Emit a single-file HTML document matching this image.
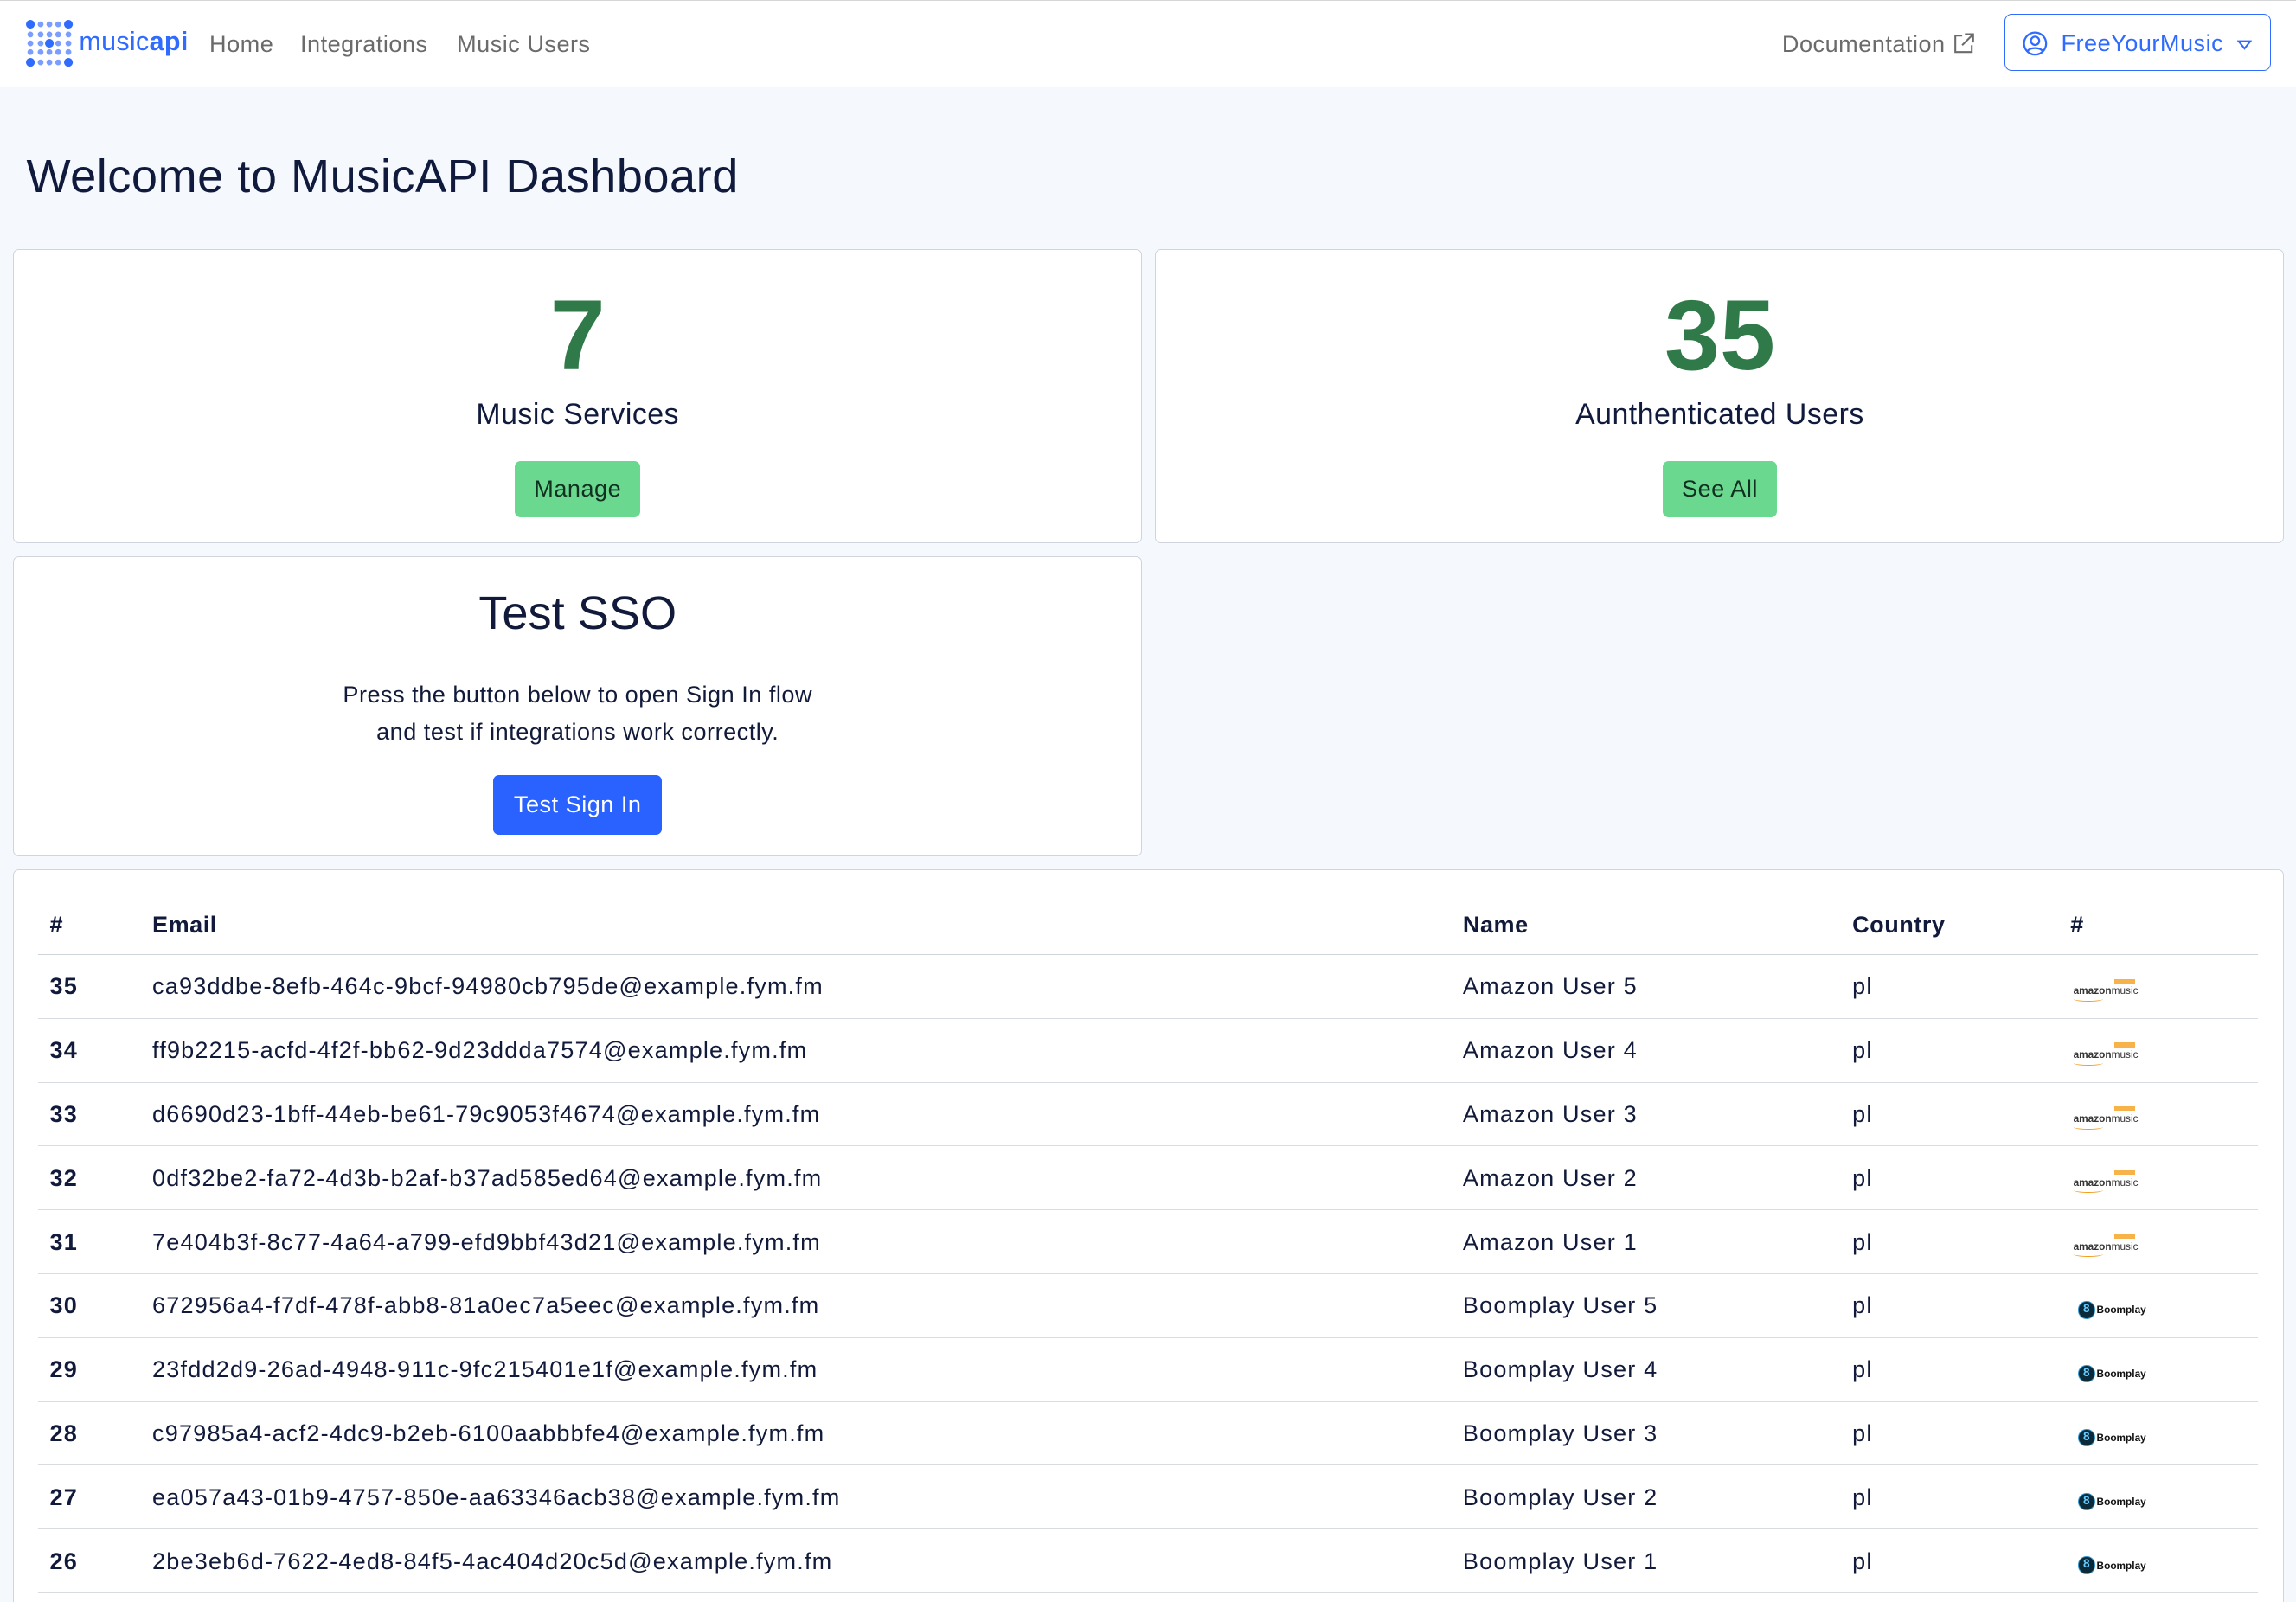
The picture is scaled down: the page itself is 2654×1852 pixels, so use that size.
<!DOCTYPE html>
<html><head><meta charset="utf-8">
<style>
*{box-sizing:border-box;margin:0;padding:0}
html,body{width:2654px;height:1852px;overflow:hidden;background:#f5f8fd}
#w{width:1568px;height:1094px;zoom:1.69260;position:relative;font-family:"Liberation Sans",sans-serif;color:#111a3a}
.nav{position:absolute;left:0;top:0;width:1568px;height:59px;background:#fff;border-top:1px solid #d6d6d6}
.nav a{position:absolute;top:20px;font-size:16px;color:#6b6b6b;text-decoration:none;letter-spacing:0.3px}
h1{position:absolute;left:18px;top:102px;font-size:32px;font-weight:400;color:#101a3c;letter-spacing:0.3px}
.card{position:absolute;background:#fff;border:1px solid #d0d5dd;border-radius:4px;text-align:center}
.num{font-size:68px;font-weight:700;color:#2f7a48;line-height:1;margin-top:25px}
.lbl{font-size:20px;margin-top:8px;color:#101a3c;letter-spacing:0.3px}
.gb{display:inline-block;background:#6bd88f;color:#103020;font-size:16px;border-radius:4px;padding:10px 13px;margin-top:20px;letter-spacing:0.3px}
table{position:absolute;left:26px;top:612px;width:1516px;border-collapse:collapse;font-size:16px;letter-spacing:0.7px}
th{text-align:left;font-weight:700;height:40px;border-bottom:1px solid #cfd3da;padding-top:0;letter-spacing:0.3px}
td{height:43.6px;border-bottom:1px solid #d8dbe0}
td:first-child,th:first-child{padding-left:8px;font-weight:700;width:78px}
.am{font-size:7px;font-weight:700;color:#333;position:relative;letter-spacing:0}
.am i{font-style:normal;font-weight:400}
.am:before{content:"";position:absolute;left:30px;top:-4px;width:14px;height:3px;background:#f7b24a}
.am:after{content:"";position:absolute;left:2px;top:8px;width:20px;height:3px;border-bottom:1px solid #f29a1a;border-radius:0 0 50% 50%}
.bp{font-size:7px;font-weight:700;color:#111;display:inline-flex;align-items:center;gap:1px;letter-spacing:0}
.bp b{display:inline-block;width:12px;height:12px;border-radius:50%;background:#0b2a3a;border:1px solid #39c;color:#6cf;font-size:8px;text-align:center;line-height:10px}
</style></head><body><div id="w">
<div class="nav">
<svg style="position:absolute;left:18px;top:13px" width="32" height="32" viewBox="0 0 32 32">
<g fill="#2f6bff"><circle cx="3" cy="3" r="3"/><circle cx="29" cy="3" r="3"/><circle cx="3" cy="29" r="3"/><circle cx="29" cy="29" r="3"/><circle cx="16" cy="16" r="3"/></g>
<g fill="#7a9dff"><circle cx="10" cy="3" r="2"/><circle cx="16" cy="3" r="2"/><circle cx="22" cy="3" r="2"/><circle cx="3" cy="10" r="2"/><circle cx="10" cy="10" r="2"/><circle cx="16" cy="10" r="2"/><circle cx="22" cy="10" r="2"/><circle cx="29" cy="10" r="2"/><circle cx="3" cy="16" r="2"/><circle cx="10" cy="16" r="2"/><circle cx="22" cy="16" r="2"/><circle cx="29" cy="16" r="2"/><circle cx="3" cy="22" r="2"/><circle cx="10" cy="22" r="2"/><circle cx="16" cy="22" r="2"/><circle cx="22" cy="22" r="2"/><circle cx="29" cy="22" r="2"/><circle cx="10" cy="29" r="2"/><circle cx="16" cy="29" r="2"/><circle cx="22" cy="29" r="2"/></g></svg>
<span style="position:absolute;left:54px;top:18px;font-size:18px;color:#2f6bff;letter-spacing:0.2px">music<b>api</b></span>
<a style="left:143px">Home</a><a style="left:205px">Integrations</a><a style="left:312px">Music Users</a>
<a style="left:1217px">Documentation <svg width="15" height="15" viewBox="0 0 16 16" style="vertical-align:-2px" fill="none" stroke="#6b6b6b" stroke-width="1.3"><path d="M7 2H2v12h12V9M9 1h6v6M15 1L7 9"/></svg></a>
<div style="position:absolute;left:1369px;top:9px;width:182px;height:39px;border:1px solid #2f6bff;border-radius:5px;color:#2f6bff;font-size:16px;padding:10px 0 0 38px;letter-spacing:0.3px">FreeYourMusic
<svg style="position:absolute;left:12px;top:11px" width="17" height="17" viewBox="0 0 18 18" fill="none" stroke="#2f6bff" stroke-width="1.4"><circle cx="9" cy="9" r="8"/><circle cx="9" cy="7" r="3"/><path d="M3.5 14.5c2-3 9-3 11 0"/></svg>
<svg style="position:absolute;left:158px;top:17px" width="10" height="7" viewBox="0 0 10 7" fill="none" stroke="#2f6bff" stroke-width="1.2"><path d="M1 1h8L5 6z"/></svg></div>
</div>
<h1>Welcome to MusicAPI Dashboard</h1>
<div class="card" style="left:9px;top:170px;width:771px;height:201px"><div class="num">7</div><div class="lbl">Music Services</div><div class="gb">Manage</div></div>
<div class="card" style="left:789px;top:170px;width:771px;height:201px"><div class="num">35</div><div class="lbl">Aunthenticated Users</div><div class="gb">See All</div></div>
<div class="card" style="left:9px;top:380px;width:771px;height:205px">
<div style="font-size:32px;margin-top:20px">Test SSO</div>
<div style="font-size:16px;line-height:25px;margin-top:25px;letter-spacing:0.3px">Press the button below to open Sign In flow<br>and test if integrations work correctly.</div>
<div style="display:inline-block;background:#2962ff;color:#fff;font-size:16px;border-radius:4px;padding:11px 14px;margin-top:17px;letter-spacing:0.3px">Test Sign In</div></div>
<div class="card" style="left:9px;top:594px;width:1551px;height:520px"></div>
<table>
<tr><th>#</th><th style="width:895px">Email</th><th style="width:266px">Name</th><th style="width:149px">Country</th><th>#</th></tr>
<tr><td>35</td><td>ca93ddbe-8efb-464c-9bcf-94980cb795de@example.fym.fm</td><td>Amazon User 5</td><td>pl</td><td><span class="am">&nbsp;amazon<i>music</i></span></td></tr>
<tr><td>34</td><td>ff9b2215-acfd-4f2f-bb62-9d23ddda7574@example.fym.fm</td><td>Amazon User 4</td><td>pl</td><td><span class="am">&nbsp;amazon<i>music</i></span></td></tr>
<tr><td>33</td><td>d6690d23-1bff-44eb-be61-79c9053f4674@example.fym.fm</td><td>Amazon User 3</td><td>pl</td><td><span class="am">&nbsp;amazon<i>music</i></span></td></tr>
<tr><td>32</td><td>0df32be2-fa72-4d3b-b2af-b37ad585ed64@example.fym.fm</td><td>Amazon User 2</td><td>pl</td><td><span class="am">&nbsp;amazon<i>music</i></span></td></tr>
<tr><td>31</td><td>7e404b3f-8c77-4a64-a799-efd9bbf43d21@example.fym.fm</td><td>Amazon User 1</td><td>pl</td><td><span class="am">&nbsp;amazon<i>music</i></span></td></tr>
<tr><td>30</td><td>672956a4-f7df-478f-abb8-81a0ec7a5eec@example.fym.fm</td><td>Boomplay User 5</td><td>pl</td><td><span class="bp">&nbsp;&nbsp;<b>8</b>Boomplay</span></td></tr>
<tr><td>29</td><td>23fdd2d9-26ad-4948-911c-9fc215401e1f@example.fym.fm</td><td>Boomplay User 4</td><td>pl</td><td><span class="bp">&nbsp;&nbsp;<b>8</b>Boomplay</span></td></tr>
<tr><td>28</td><td>c97985a4-acf2-4dc9-b2eb-6100aabbbfe4@example.fym.fm</td><td>Boomplay User 3</td><td>pl</td><td><span class="bp">&nbsp;&nbsp;<b>8</b>Boomplay</span></td></tr>
<tr><td>27</td><td>ea057a43-01b9-4757-850e-aa63346acb38@example.fym.fm</td><td>Boomplay User 2</td><td>pl</td><td><span class="bp">&nbsp;&nbsp;<b>8</b>Boomplay</span></td></tr>
<tr><td>26</td><td>2be3eb6d-7622-4ed8-84f5-4ac404d20c5d@example.fym.fm</td><td>Boomplay User 1</td><td>pl</td><td><span class="bp">&nbsp;&nbsp;<b>8</b>Boomplay</span></td></tr>
</table>
</div></body></html>
